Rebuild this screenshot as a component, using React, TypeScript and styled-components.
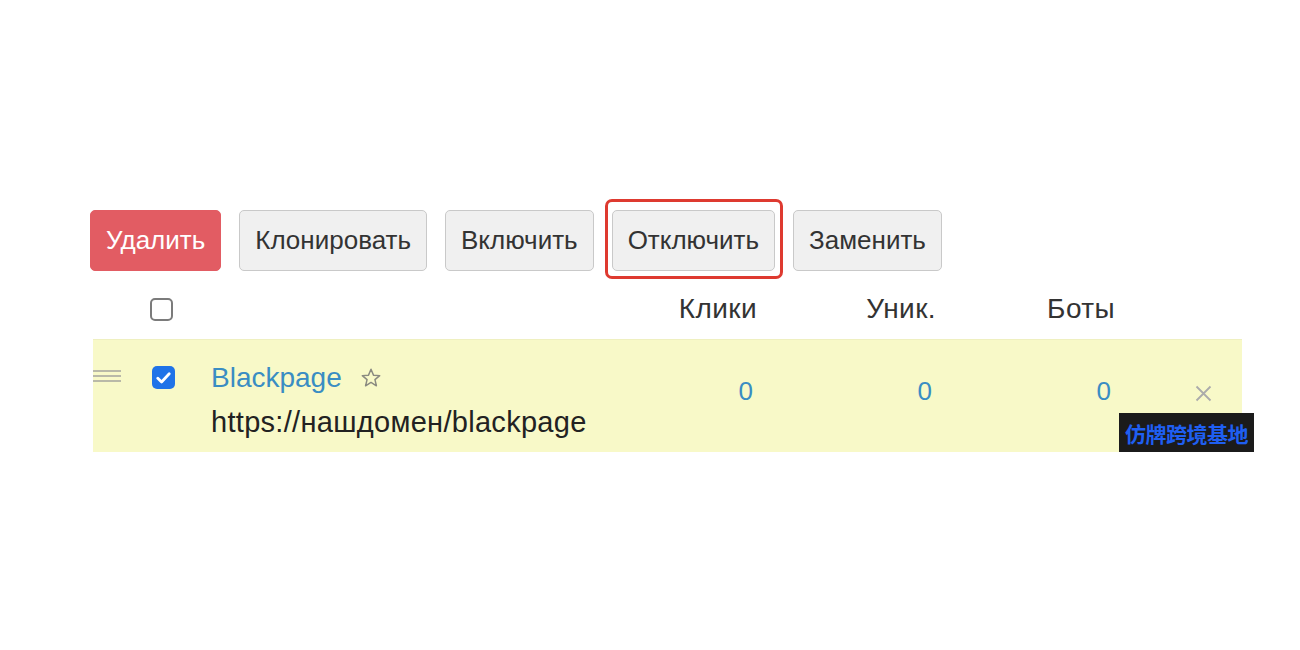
import React from 'react';
import styled, {createGlobalStyle} from 'styled-components';

const TEXT = '#333333';
const LINK = '#3a8dc3';
const ROW_BG = '#f8f9c8';

const GlobalStyle = createGlobalStyle`
  html, body {
    margin: 0;
    background: #ffffff;
  }
  body {
    font-family: "Liberation Sans", Arial, Helvetica, sans-serif;
    color: ${TEXT};
  }
`;

const Page = styled.div`
  padding: 210px 0 0 90px;
`;

const Toolbar = styled.div`
  display: flex;
  align-items: center;
  gap: 18px;
`;

const Button = styled.button<{danger?: boolean}>`
  position: relative;
  height: 61px;
  padding: 0 15px;
  border-radius: 5px;
  font-family: inherit;
  font-size: 26px;
  cursor: pointer;
  color: ${p => (p.danger ? '#ffffff' : TEXT)};
  background: ${p => (p.danger ? '#e25c63' : '#f0f0f0')};
  border: 1px solid ${p => (p.danger ? '#e25c63' : '#c9c9c9')};
`;

// red annotation frame drawn over the button
const Highlight = styled.span`
  position: absolute;
  top: -12px;
  bottom: -9px;
  left: -8px;
  right: -9px;
  border: 3px solid #de3a30;
  border-radius: 7px;
  pointer-events: none;
`;

const Table = styled.div`
  margin-left: 3px;
  width: 1149px;
`;

const Row = styled.div<{selected?: boolean}>`
  display: grid;
  grid-template-columns: 57px 61px minmax(0, 1fr) 179px 179px 179px 127px;
  align-items: ${p => (p.selected ? 'start' : 'center')};
  height: ${p => (p.selected ? '113px' : '68px')};
  padding-top: ${p => (p.selected ? 0 : 8)}px;
  background: ${p => (p.selected ? ROW_BG : 'transparent')};
  border-top: ${p => (p.selected ? '1px solid #eff0c0' : 'none')};
  box-sizing: border-box;
  position: relative;
`;

const HeadCell = styled.div`
  font-size: 28px;
  letter-spacing: 0.4px;
  text-align: right;
  color: ${TEXT};
`;

const Handle = styled.div`
  margin-top: 30px;
  width: 28px;
  display: flex;
  flex-direction: column;
  gap: 3px;
  span {
    display: block;
    height: 2px;
    background: #b9b9a8;
  }
`;

const Box = styled.span<{checked?: boolean; offset?: number}>`
  display: inline-flex;
  align-items: center;
  justify-content: center;
  width: 23px;
  height: 23px;
  box-sizing: border-box;
  border-radius: 5px;
  vertical-align: middle;
  margin-left: ${p => p.offset ?? 0}px;
  margin-top: ${p => (p.checked ? 26 : 0)}px;
  background: ${p => (p.checked ? '#1f73e8' : '#ffffff')};
  border: ${p => (p.checked ? 'none' : '2px solid #7b7b7b')};
`;

const NameCell = styled.div`
  padding-top: 16px;
  line-height: 44px;
  white-space: nowrap;
`;

const NameLine = styled.div`
  display: flex;
  align-items: center;
  gap: 18px;
`;

const Name = styled.a`
  color: ${LINK};
  font-size: 28px;
  text-decoration: none;
`;

const Url = styled.div`
  font-size: 29px;
  letter-spacing: 0.3px;
  color: #222222;
`;

const Num = styled.a`
  display: block;
  text-align: right;
  padding: 36px 4px 0 0;
  font-size: 26px;
  color: ${LINK};
  text-decoration: none;
`;

const Close = styled.div`
  padding: 45px 0 0 80px;
`;

const Watermark = styled.div`
  position: absolute;
  right: -12px;
  bottom: 0;
  width: 135px;
  height: 39px;
  display: flex;
  align-items: center;
  justify-content: center;
  background: #1b1b1b;
  color: #1f5ff2;
  font-family: "Noto Sans CJK SC", sans-serif;
  font-weight: 700;
  font-size: 21px;
  letter-spacing: -0.5px;
`;

const Check = () => (
  <svg width="15" height="12" viewBox="0 0 15 12">
    <path d="M1.8 6.2 L5.6 10 L13.2 1.8" fill="none" stroke="#fff" strokeWidth="2.8" strokeLinecap="round" strokeLinejoin="round" />
  </svg>
);

const Star = () => (
  <svg width="22" height="22" viewBox="0 0 24 24">
    <path
      d="M12 2.5 L14.7 8.9 L21.5 9.4 L16.3 13.8 L17.9 20.5 L12 16.9 L6.1 20.5 L7.7 13.8 L2.5 9.4 L9.3 8.9 Z"
      fill="none"
      stroke="#8a8a80"
      strokeWidth="1.6"
      strokeLinejoin="round"
    />
  </svg>
);

const Cross = () => (
  <svg width="17" height="17" viewBox="0 0 17 17">
    <path d="M1.5 1.5 L15.5 15.5 M15.5 1.5 L1.5 15.5" stroke="#ababab" strokeWidth="1.8" />
  </svg>
);

const App = () => (
  <Page>
    <GlobalStyle />
    <Toolbar>
      <Button danger>Удалить</Button>
      <Button>Клонировать</Button>
      <Button>Включить</Button>
      <Button>
        Отключить
        <Highlight />
      </Button>
      <Button>Заменить</Button>
    </Toolbar>
    <Table>
      <Row>
        <div />
        <div>
          <Box />
        </div>
        <div />
        <HeadCell>Клики</HeadCell>
        <HeadCell>Уник.</HeadCell>
        <HeadCell>Боты</HeadCell>
        <div />
      </Row>
      <Row selected>
        <Handle>
          <span />
          <span />
          <span />
        </Handle>
        <div>
          <Box checked offset={2}>
            <Check />
          </Box>
        </div>
        <NameCell>
          <NameLine>
            <Name href="#">Blackpage</Name>
            <Star />
          </NameLine>
          <Url>https://нашдомен/blackpage</Url>
        </NameCell>
        <Num href="#">0</Num>
        <Num href="#">0</Num>
        <Num href="#">0</Num>
        <Close>
          <Cross />
        </Close>
        <Watermark>仿牌跨境基地</Watermark>
      </Row>
    </Table>
  </Page>
);

export default App;
